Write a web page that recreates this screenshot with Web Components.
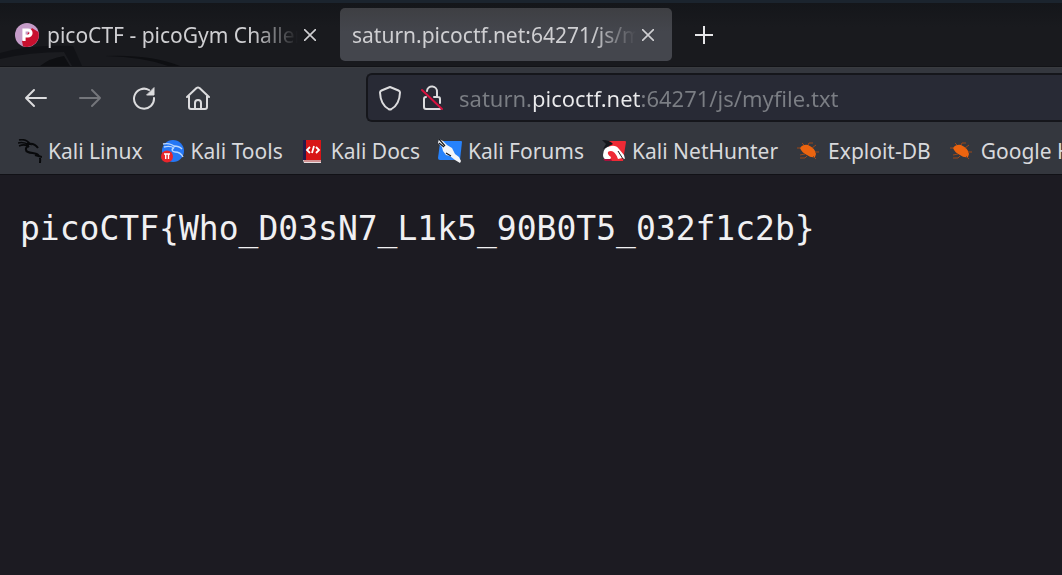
<!DOCTYPE html>
<html lang="en">
<head>
<meta charset="utf-8">
<title>saturn.picoctf.net:64271/js/myfile.txt</title>
<style>
  html, body { height: 100%; margin: 0; }
  body { background: #1c1b22; color: #fbfbfe; font-family: "Noto Sans", "Open Sans", sans-serif; overflow: hidden; }
</style>
</head>
<body>
<browser-window></browser-window>

<template id="window-template">
  <style>
    :host { display: flex; flex-direction: column; min-height: 100%; }
    tab-strip { flex: none; }
    main { flex: 1; padding: 32px 20px; }
    pre { margin: 0; font: 33px/44px "DejaVu Sans Mono", monospace; color: #f0f0f2; }
  </style>
  <tab-strip>
    <browser-tab label="picoCTF - picoGym Challenges">
      <svg slot="icon" width="24" height="24" viewBox="0 0 24 24" aria-hidden="true">
        <circle cx="12" cy="12" r="12" fill="#c59cc8"/>
        <path d="M17 5 23.4 9A12 12 0 0 1 8 23.3L7 18z" fill="#c8102e"/>
        <path d="M9 18V7h4a3 3 0 0 1 0 6H9" fill="none" stroke="#fff" stroke-width="3.2"/>
      </svg>
    </browser-tab>
    <browser-tab label="saturn.picoctf.net:64271/js/myfile.txt" selected></browser-tab>
  </tab-strip>
  <nav-toolbar></nav-toolbar>
  <bookmarks-bar>
    <bookmark-link href="https://www.kali.org/">
      <svg slot="icon" width="24" height="24" viewBox="0 0 24 24" aria-hidden="true">
        <path d="M1 1c5-1 9 1 11 4l-3-1M0 4c4-1 8 0 11 2M1 7c5-2 8-1 10 1" fill="none" stroke="#08090b" stroke-width="1.6"/>
        <path d="M10 5c5-1 8 1 10 4M11 7c-4 1-4 5-1 6 4 2 8 0 11 4 2 2 1 4 1 7M17 16l7 2" fill="none" stroke="#08090b" stroke-width="2"/>
      </svg>Kali Linux</bookmark-link>
    <bookmark-link href="https://www.kali.org/tools/">
      <svg slot="icon" width="24" height="24" viewBox="0 0 24 24" aria-hidden="true">
        <circle cx="12" cy="12" r="11" fill="#2577f5"/>
        <path d="M2 5c5-1 9 0 12 3M3 8c4-1 7-1 10 1M13 7c4 0 6 1 8 3M13 9c-3 1-2 4 1 4 4 0 6 1 8 5" fill="none" stroke="#b9d6ff" stroke-width="1.4"/>
        <circle cx="6" cy="17.5" r="6" fill="#e8252b"/>
        <path d="M3 15h6M4.7 15v5M7.5 15v5" stroke="#fff" stroke-width="1.4"/>
      </svg>Kali Tools</bookmark-link>
    <bookmark-link href="https://www.kali.org/docs/">
      <svg slot="icon" width="24" height="24" viewBox="0 0 24 24" aria-hidden="true">
        <path d="M2 1h3v20H2z" fill="#241a4a"/><path d="M5 1h15v20H5z" fill="#d81517"/>
        <path d="M2 21h18v3H3z" fill="#e9dfe1"/><path d="M3 22h17" stroke="#b44"/>
        <path d="m9 8-3 3 3 3m6-6 3 3-3 3m-2-7-2 7" fill="none" stroke="#fff" stroke-width="1.8"/>
      </svg>Kali Docs</bookmark-link>
    <bookmark-link href="https://forums.kali.org/">
      <svg slot="icon" width="24" height="24" viewBox="0 0 24 24" aria-hidden="true">
        <path d="M5 2h18q1 0 1 1l-2 18H2q-2 0-2-2L2 4z" fill="#2782fb"/>
        <path d="M1 0 5 2l4 4 5 3 3 6 4 3 2 4-1 2-5-3-5-4-4-1-3-4-1-4-4-4z" fill="#f4f5f7"/>
        <path d="m1 0 6 7M1 4l5 4M8 14l5 3" fill="none" stroke="#15171c" stroke-width="1.2"/>
      </svg>Kali Forums</bookmark-link>
    <bookmark-link href="https://www.kali.org/kali-nethunter/">
      <svg slot="icon" width="24" height="24" viewBox="0 0 24 24" aria-hidden="true">
        <path d="M7 2h16q1 0 1 1l-3 19H5q-4-5 2-11z" fill="#ee2a35"/>
        <path d="M0 1q8 0 11 4L1 10l3-5z" fill="#15171c"/>
        <path d="M1 16q0-8 8-9 5-1 8 3l5 6 1 4-3-1-4 1q-3-8-7-8-4 0-3 3 1 2 3 3l-1 3H5q-4-1-4-5z" fill="#fff"/>
        <path d="M16 12l5 8" stroke="#222"/>
        <path d="M1 20h8l1 2H3z" fill="#a6123d"/>
      </svg>Kali NetHunter</bookmark-link>
    <bookmark-link href="https://www.exploit-db.com/"><bug-icon slot="icon"></bug-icon>Exploit-DB</bookmark-link>
    <bookmark-link href="https://www.exploit-db.com/google-hacking-database"><bug-icon slot="icon"></bug-icon>Google Hacking DB</bookmark-link>
  </bookmarks-bar>
  <main><pre>picoCTF{Who_D03sN7_L1k5_90B0T5_032f1c2b}</pre></main>
</template>

<template id="strip-template">
  <style>
    :host { display: flex; position: relative; align-items: center; box-sizing: border-box; height: 67px;
      border-top: 3px solid #1b242e; gap: 6px;
      background: linear-gradient(#14161a, #191a1e 24px, #191a1e); border-bottom: 1px solid #121317; overflow: hidden; }
    .art { position: absolute; left: 0; bottom: 0; }
    button { flex: none; width: 52px; height: 52px; padding: 0; border: 0; background: none; color: #e6e6e8; display: grid; place-items: center; }
  </style>
  <svg class="art" width="190" height="22" viewBox="0 0 190 22" aria-hidden="true">
    <path d="M0 9Q30 0 73 2l9 20H0z" fill="#111216"/>
    <path d="M0 15q30-7 64-7l8 14H0z" fill="#1b1c20"/>
    <path d="M40 22q10-8 24-10l6 10zM105 12q45-2 75 10h-12q-24-9-63-10z" fill="#0e0f12"/>
  </svg>
  <slot></slot>
  <button type="button" aria-label="Open a new tab">
    <svg width="20" height="20" viewBox="0 0 20 20"><path d="M10 1v18M1 10h18" stroke="currentColor" stroke-width="2"/></svg>
  </button>
</template>

<template id="tab-template">
  <style>
    :host { display: flex; position: relative; flex: 0 1 334px; min-width: 0; height: 53px; box-sizing: border-box;
      align-items: center; padding: 0 12px 0 15px; border-radius: 5px; color: #cfcfd2; font-size: 21px; line-height: 30px; }
    :host([selected]) { flex-basis: 332px; padding: 0 12px; background: linear-gradient(#3e3f43, #44464d 24px, #44464d); }
    ::slotted(svg) { flex: none; margin-right: 8px; }
    .label { flex: 1; min-width: 0; overflow: hidden; white-space: nowrap;
      -webkit-mask-image: linear-gradient(to left, transparent, #000 44px); mask-image: linear-gradient(to left, transparent, #000 44px); }
    button { flex: none; width: 24px; height: 24px; padding: 0; border: 0; background: none; color: #cfcfd2; display: grid; place-items: center; }
  </style>
  <slot name="icon"></slot>
  <span class="label"></span>
  <button type="button" aria-label="Close tab">
    <svg width="12" height="12" viewBox="0 0 12 12"><path d="m0 0 12 12M12 0 0 12" stroke="currentColor" stroke-width="1.6"/></svg>
  </button>
</template>

<template id="toolbar-template">
  <style>
    :host { display: flex; align-items: center; box-sizing: border-box; height: 61px; padding-left: 9px; border-top: 1px solid #393b3f; background: #34373e; }
    button { padding: 0; border: 0; background: none; display: grid; place-items: center; color: #dcdcde; }
    button:disabled { color: #74767b; }
    nav { display: flex; flex: none; width: 357px; }
    nav button { width: 54px; height: 48px; }
    svg { fill: none; stroke: currentColor; stroke-width: 2; stroke-linecap: round; stroke-linejoin: round; }
    form { flex: 1; min-width: 0; display: flex; align-items: center; box-sizing: border-box; height: 49px; margin: 0 0 1px;
      padding-left: 1px; border: 2px solid #15161b; border-right: 0; border-radius: 6px 0 0 6px; background: #282a35; }
    form button { flex: none; width: 42px; height: 40px; }
    input { flex: 1; min-width: 0; height: 40px; padding: 0 0 0 6px; border: 0; outline: 0;
      font: 22px/32px "Noto Sans", "Open Sans", sans-serif; color: transparent;
      background: linear-gradient(to right, #7b7e84 79px, #eaeaec 79px, #eaeaec 187px, #7b7e84 187px);
      -webkit-background-clip: text; background-clip: text; }
  </style>
  <nav aria-label="Page navigation">
    <button type="button" aria-label="Back"><svg width="24" height="24" viewBox="0 0 24 24"><path d="M22 12H2m8-8-8 8 8 8"/></svg></button>
    <button type="button" aria-label="Forward" disabled><svg width="24" height="24" viewBox="0 0 24 24"><path d="M2 12h20m-8-8 8 8-8 8"/></svg></button>
    <button type="button" aria-label="Reload"><svg width="24" height="24" viewBox="0 0 24 24"><path d="M22 12A10 10 0 1 1 17 4"/><path d="M22 2v7h-7z" fill="currentColor" stroke-width="1"/></svg></button>
    <button type="button" aria-label="Home"><svg width="24" height="24" viewBox="0 0 24 24"><path d="M1 11 10.5 2q1.500-1 3 0L23 11M3 10v11q0 2 2 2h14q2 0 2-2V10M9 23v-6q0-3 3-3t3 3v6"/></svg></button>
  </nav>
  <form>
    <button type="button" aria-label="Tracking protection"><svg width="24" height="26" viewBox="0 0 24 26"><path d="M12 2 20.500 5.500q1.500.7 1.500 2-.5 12-8.500 16.500-1.500.8-3 0Q2.500 19.500 2 7.500q0-1.300 1.500-2z"/></svg></button>
    <button type="button" aria-label="Connection is not secure"><svg width="24" height="26" viewBox="0 0 24 26"><path d="M7 6a5 5 0 0 1 10 1v5M14 12h4q2 0 2 2v4M6 12q-2 0-2 2v8q0 2 2 2h14"/><path d="m2 5 20 19" stroke="#d8123f"/></svg></button>
    <input type="text" aria-label="Address" value="saturn.picoctf.net:64271/js/myfile.txt" spellcheck="false">
  </form>
</template>

<template id="bookmarks-template">
  <style>
    :host { display: flex; box-sizing: border-box; height: 47px; padding: 8px 0 0 18px; gap: 18px; overflow: hidden; background: #34373e; border-bottom: 1px solid #111116; }
  </style>
  <slot></slot>
</template>

<template id="bookmark-template">
  <style>
    :host { display: block; flex: none; }
    a { display: flex; align-items: center; gap: 6px; height: 30px; color: #d8d9dc; text-decoration: none; font-size: 21px; line-height: 30px; white-space: nowrap; }
  </style>
  <a><slot name="icon"></slot><span><slot></slot></span></a>
</template>

<template id="bug-template">
  <style>:host { display: block; width: 26px; height: 24px; } svg { display: block; }</style>
  <svg width="26" height="24" viewBox="0 0 26 24" aria-hidden="true">
    <path d="M4 9q3-4 8-3 7 3 8 9l-1 3q-4 1-8-2-5-2-7-7z" fill="#ec640f"/>
    <path d="m8 6-2-2m6 2 1-2 4 0m-1 5 4-3m-1 7 4 0m-6 4 3 3M9 15l-5 1m7 1-2 2-5 0M4 9 1 9" fill="none" stroke="#9c4819"/>
  </svg>
</template>

<script>
  function define(name, templateId, setup) {
    customElements.define(name, class extends HTMLElement {
      constructor() {
        super();
        this.attachShadow({ mode: "open" }).append(document.getElementById(templateId).content.cloneNode(true));
      }
      connectedCallback() { if (setup) setup(this, this.shadowRoot); }
    });
  }
  define("bug-icon", "bug-template");
  define("bookmark-link", "bookmark-template", (host, root) => { root.querySelector("a").href = host.getAttribute("href"); });
  define("bookmarks-bar", "bookmarks-template");
  define("nav-toolbar", "toolbar-template");
  define("browser-tab", "tab-template", (host, root) => { root.querySelector(".label").textContent = host.getAttribute("label"); });
  define("tab-strip", "strip-template");
  define("browser-window", "window-template");
</script>
</body>
</html>
